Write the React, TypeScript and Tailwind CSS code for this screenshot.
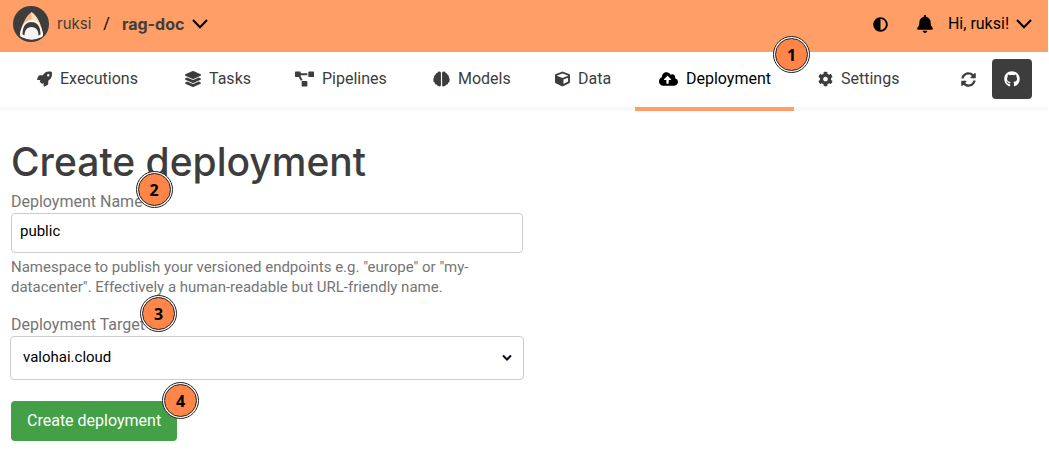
import React from "react";
import { FaRocket, FaLayerGroup, FaProjectDiagram, FaCube, FaCloudUploadAlt, FaCog, FaSyncAlt, FaGithub, FaBell, FaAdjust } from "react-icons/fa";

type NavItem = {
  label: string;
  icon: React.ComponentType<{ className?: string }>;
  width: string;
  iconClass: string;
  active?: boolean;
};

function BrainIcon({ className }: { className?: string }) {
  return (
    <svg viewBox="0 0 18 16" className={className} fill="currentColor" aria-hidden="true">
      <path d="M8.400 1.200V14.800Q7.800 16 6.200 15.800 4.500 15.600 4.100 14.200 2 14 1.800 12 .2 11 .4 9.200 0 7.600 1.100 6.400.8 4.500 2.600 3.600 2.700 1.900 4.500 1.600 5.200 0 6.800.1 8 .2 8.400 1.200Z" />
      <path d="M9.600 1.200V14.800Q10.200 16 11.800 15.800 13.500 15.600 13.900 14.200 16 14 16.200 12 17.800 11 17.600 9.200 18 7.600 16.900 6.400 17.200 4.500 15.400 3.600 15.300 1.900 13.500 1.600 12.800 0 11.200.1 10 .2 9.600 1.200Z" />
    </svg>
  );
}

const navItems: NavItem[] = [
  { label: "Executions", icon: FaRocket, width: "w-[148px]", iconClass: "w-[15px]" },
  { label: "Tasks", icon: FaLayerGroup, width: "w-[110px]", iconClass: "w-4" },
  { label: "Pipelines", icon: FaProjectDiagram, width: "w-[138px]", iconClass: "w-[19px]" },
  { label: "Models", icon: BrainIcon, width: "w-[122px]", iconClass: "w-[17px]" },
  { label: "Data", icon: FaCube, width: "w-[104px]", iconClass: "w-[15px]" },
  { label: "Deployment", icon: FaCloudUploadAlt, width: "w-[159px]", iconClass: "w-[19px]", active: true },
  { label: "Settings", icon: FaCog, width: "w-[130px]", iconClass: "w-[15px]" },
];

function Chevron() {
  return (
    <svg viewBox="0 0 16 10" className="h-[10px] w-4 shrink-0" fill="none" stroke="currentColor" strokeWidth="2" aria-hidden="true">
      <path d="M1 1l7 7.2L15 1" />
    </svg>
  );
}

function SharkLogo() {
  return (
    <svg viewBox="0 0 36 36" className="size-9 shrink-0" aria-hidden="true">
      <circle cx="18" cy="18" r="18" fill="#3d3d3d" />
      <path d="M18.500 6C13 10 8.500 19 7 28Q7 31 9.500 31.500H27.500Q30 31 30 28C28.500 19 24 10 18.500 6Z" fill="#ffb37a" />
      <path d="M18.500 6V16L27.500 19C25.500 13 22 8.500 18.500 6Z" fill="#ffe0b8" />
      <path d="M7 28C8.500 20 12 14 18.500 14S28.500 20 30 28Q30 31 27 31.500Q24 33.500 18.500 33.500T10 31.500Q7 31 7 28Z" fill="#fff" />
      <path d="M9.500 28.500C9.500 20 13 16 18.500 16S27.500 20 27.500 28.500L25.500 29.500H11.500Z" fill="#3d3d3d" />
      <path d="M11.500 29.500C11.500 24.500 14 21 18.500 21S25.500 24.500 25.500 29.500Q23 33.500 18.500 33.500T11.500 29.500Z" fill="#f5f5f5" />
    </svg>
  );
}

function Marker({ n, place }: { n: number; place: string }) {
  return (
    <span className={`pointer-events-none absolute z-10 flex size-[37px] items-center justify-center rounded-full border border-[#222] bg-white ${place}`}>
      <span className="flex size-[33px] items-center justify-center rounded-full border border-[#222] bg-[#ff8548] font-['Noto_Sans',sans-serif] text-base font-bold text-black">{n}</span>
    </span>
  );
}

export default function App() {
  return (
    <div className="mr-px bg-white font-[Roboto,sans-serif] text-base text-[#3d3d3d]">
      <header className="flex h-13 items-center justify-between bg-[#ff9e66] pr-4 pb-1 pl-[13px]">
        <div className="flex items-center">
          <SharkLogo />
          <a href="#owner" className="ml-2 font-['Inter',sans-serif] text-[15px]">ruksi</a>
          <span className="mx-3 text-black">/</span>
          <button type="button" className="flex items-center gap-2 font-['Inter',sans-serif] text-base font-bold">
            rag-doc
            <span className="text-black"><Chevron /></span>
          </button>
        </div>
        <div className="flex items-center text-black">
          <button type="button" aria-label="Toggle theme"><FaAdjust className="size-[15px]" /></button>
          <button type="button" aria-label="Notifications" className="ml-7"><FaBell className="size-[18px]" /></button>
          <button type="button" className="ml-[14px] flex items-center gap-[7px]">Hi, ruksi!<Chevron /></button>
        </div>
      </header>

      <nav className="flex h-[59px] items-stretch justify-between pr-4 pl-[13px] shadow-[inset_0_-4px_#f9f9f9]">
        <div className="flex">
          {navItems.map(({ label, icon: Icon, width, iconClass, active }) => (
            <a
              key={label}
              href={`#${label.toLowerCase()}`}
              className={`relative flex shrink-0 items-center gap-2 border-b-4 pb-px pl-6 whitespace-nowrap ${width} ${active ? "border-[#ff9e66] text-black" : "border-transparent"}`}
            >
              <Icon className={`h-4 shrink-0 ${iconClass}`} />
              {label}
              {active && <Marker n={1} place="-top-4 -right-4" />}
            </a>
          ))}
        </div>
        <div className="flex items-center gap-4 pb-[5px]">
          <button type="button" aria-label="Refresh"><FaSyncAlt className="size-[15px]" /></button>
          <a href="#github" aria-label="GitHub" className="flex size-10 items-center justify-center rounded bg-[#3d3d3d] text-white">
            <FaGithub className="size-4" />
          </a>
        </div>
      </nav>

      <main className="px-[11px] pt-[27px]">
        <h1 className="font-['Inter',sans-serif] text-[39px] leading-12 font-medium">Create deployment</h1>
        <form className="max-w-[512px]">
          <div className="flex pt-[5px]">
            <label htmlFor="name" className="relative leading-[22px] text-[#757575]">
              Deployment Name
              <Marker n={2} place="-right-[30px] -top-5" />
            </label>
          </div>
          <input id="name" defaultValue="public" className="block h-10 w-full rounded border border-[#ccc] px-2 pb-1 text-[15px] text-black" />
          <p className="mt-1 text-[15px] leading-5 text-[#757575]">
            Namespace to publish your versioned endpoints e.g. "europe" or "my-datacenter". Effectively a human-readable but URL-friendly name.
          </p>
          <div className="mt-[17px] flex">
            <label htmlFor="target" className="relative leading-[22px] text-[#757575]">
              Deployment Target
              <Marker n={3} place="-right-8 -top-[19px]" />
            </label>
          </div>
          <div className="relative -mx-px">
            <select id="target" className="block h-11 w-full appearance-none rounded border border-[#ccc] bg-white px-3 pb-px text-[15px] text-black">
              <option>valohai.cloud</option>
            </select>
            <svg viewBox="0 0 10 8" className="pointer-events-none absolute top-[18px] right-3 h-2 w-[10px]" fill="none" stroke="#0a0a23" strokeWidth="2" aria-hidden="true">
              <path d="M1 1.500l4 4 4-4" />
            </svg>
          </div>
          <button type="button" className="relative mt-[21px] flex h-10 items-center rounded bg-[#43a047] px-4 text-white">
            Create deployment
            <Marker n={4} place="-right-[22px] -top-[19px]" />
          </button>
        </form>
      </main>
    </div>
  );
}
